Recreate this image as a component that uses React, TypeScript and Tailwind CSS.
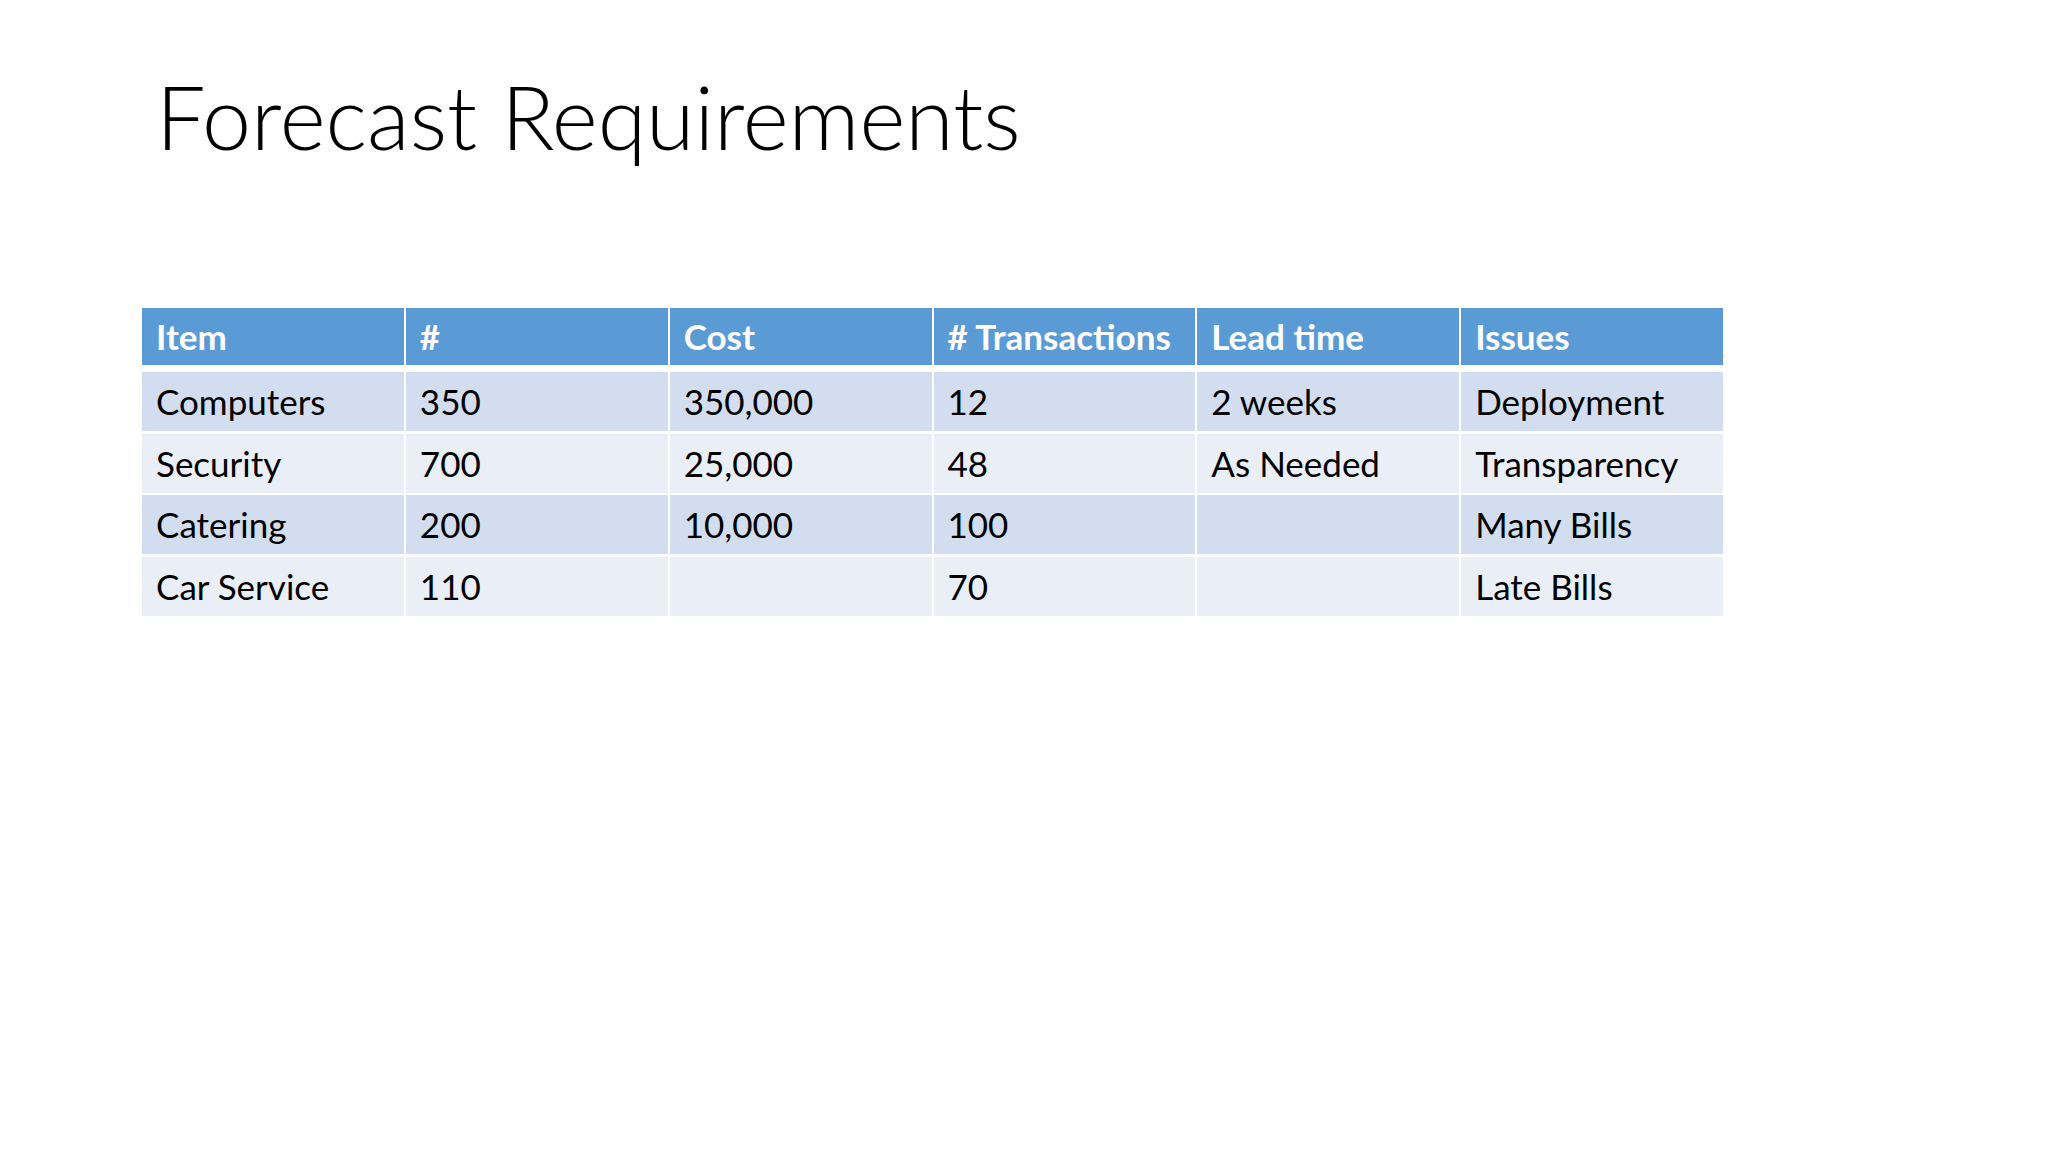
const columns = ["Item", "#", "Cost", "# Transactions", "Lead time", "Issues"];

const rows: string[][] = [
  ["Computers", "350", "350,000", "12", "2 weeks", "Deployment"],
  ["Security", "700", "25,000", "48", "As Needed", "Transparency"],
  ["Catering", "200", "10,000", "100", "", "Many Bills"],
  ["Car Service", "110", "", "70", "", "Late Bills"],
];

export default function App() {
  return (
    <div className="h-[1152px] w-[2048px] overflow-hidden bg-white font-['Lato',sans-serif] text-black">
      <div className="pl-[156px] pt-[61px]">
        <h1 className="text-[88px] font-light leading-[110px]">Forecast Requirements</h1>
      </div>

      <div className="ml-[142px] mt-[137px] w-[1581px]">
        <div className="grid grid-cols-6 gap-x-[2px]">
          {columns.map((label) => (
            <div
              key={label}
              className="flex h-[57px] items-center whitespace-nowrap bg-[#5b9bd5] pl-[14px] text-[35px] font-bold text-white"
            >
              {label}
            </div>
          ))}
        </div>

        <div className="mt-[7px] grid grid-cols-6 gap-x-[2px] gap-y-[2.5px]">
          {rows.map((row, rowIndex) =>
            row.map((cell, cellIndex) => (
              <div
                key={`${rowIndex}-${cellIndex}`}
                className={
                  rowIndex % 2 === 0
                    ? "flex h-[59px] items-center bg-[#d2deef] pl-[14px] text-[35px]"
                    : "flex h-[59px] items-center bg-[#eaeff7] pl-[14px] text-[35px]"
                }
              >
                {cell}
              </div>
            )),
          )}
        </div>
      </div>
    </div>
  );
}
